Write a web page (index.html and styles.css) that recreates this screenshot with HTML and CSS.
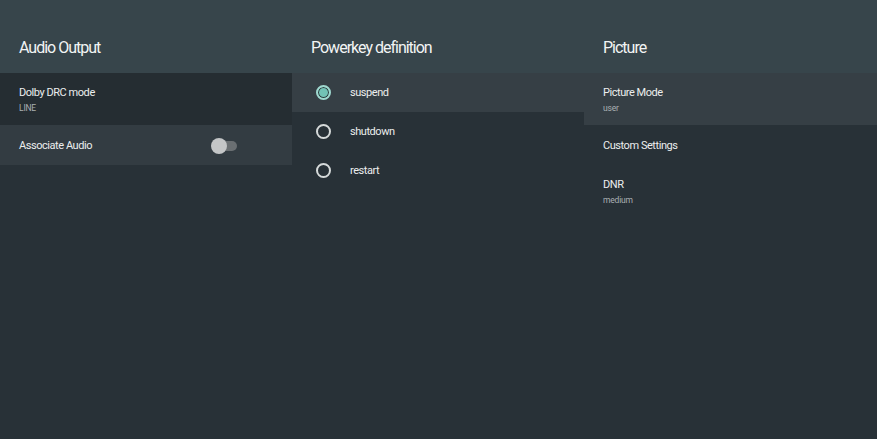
FILE: index.html
```html
<!DOCTYPE html>
<html>
<head>
<meta charset="utf-8">
<link rel="stylesheet" href="styles.css">
</head>
<body>
<div class="screen">
  <section class="col">
    <header class="col-head"><h1>Audio Output</h1></header>
    <div class="list">
      <div class="item two-line dim">
        <div class="title">Dolby DRC mode</div>
        <div class="sub">LINE</div>
      </div>
      <div class="item one-line lit">
        <div class="title">Associate Audio</div>
        <div class="switch"><span class="track"></span><span class="thumb"></span></div>
      </div>
    </div>
  </section>
  <section class="col">
    <header class="col-head"><h1>Powerkey definition</h1></header>
    <div class="list">
      <div class="item radio-row focus">
        <span class="radio checked"></span>
        <div class="title">suspend</div>
      </div>
      <div class="item radio-row">
        <span class="radio"></span>
        <div class="title">shutdown</div>
      </div>
      <div class="item radio-row">
        <span class="radio"></span>
        <div class="title">restart</div>
      </div>
    </div>
  </section>
  <section class="col">
    <header class="col-head"><h1>Picture</h1></header>
    <div class="list">
      <div class="item two-line focus">
        <div class="title">Picture Mode</div>
        <div class="sub">user</div>
      </div>
      <div class="item one-line">
        <div class="title">Custom Settings</div>
      </div>
      <div class="item two-line">
        <div class="title">DNR</div>
        <div class="sub">medium</div>
      </div>
    </div>
  </section>
</div>
</body>
</html>
```
FILE: styles.css
```css
html, body {
  margin: 0;
  padding: 0;
  background: #283137;
  font-family: Roboto, "Noto Sans", sans-serif;
  color: #ececec;
}
.screen {
  display: grid;
  grid-template-columns: 292px 292px 293px;
  width: 877px;
  height: 439px;
  background: #283137;
}
.col {
  display: flex;
  flex-direction: column;
}
.col-head {
  height: 73px;
  background: #37454b;
  display: flex;
  align-items: center;
  padding: 0 19px;
  box-sizing: border-box;
}
.col-head h1 {
  margin: 0;
  padding-top: 21px;
  font-size: 16px;
  font-weight: 400;
  letter-spacing: -1px;
  color: #f2f4f4;
}
.list {
  display: flex;
  flex-direction: column;
}
.item {
  display: flex;
  box-sizing: border-box;
  padding: 0 19px;
}
.item.two-line {
  height: 52px;
  flex-direction: column;
  justify-content: center;
  padding-top: 2px;
}
.item.one-line {
  height: 40px;
  align-items: center;
  justify-content: space-between;
  padding-top: 1px;
}
.item.dim { background: #252d32; }
.item.lit { background: #333c42; }
.item.focus { background: #363f45; }
.title {
  font-size: 11px;
  letter-spacing: -0.45px;
  color: #eceeee;
  line-height: 14px;
}
.sub {
  font-size: 8.5px;
  letter-spacing: -0.2px;
  color: #aab0b3;
  line-height: 11px;
  margin-top: 3px;
}
.radio-row {
  height: 39px;
  align-items: center;
  padding-left: 24px;
  gap: 19px;
}
.radio {
  width: 15px;
  height: 15px;
  border: 2px solid #d6dada;
  border-radius: 50%;
  box-sizing: border-box;
  flex: none;
}
.radio.checked {
  border-color: #9fd8cf;
  background: #72c2b5;
  box-shadow: inset 0 0 0 1px #2c3a3c;
}
.switch {
  position: relative;
  width: 26px;
  height: 16px;
  margin-right: 36px;
}
.track {
  position: absolute;
  left: 4px;
  right: 0;
  top: 3px;
  height: 10px;
  border-radius: 5px;
  background: #6a6f72;
}
.thumb {
  position: absolute;
  left: 0;
  top: 0;
  width: 16px;
  height: 16px;
  border-radius: 50%;
  background: #c4c6c7;
}
```
